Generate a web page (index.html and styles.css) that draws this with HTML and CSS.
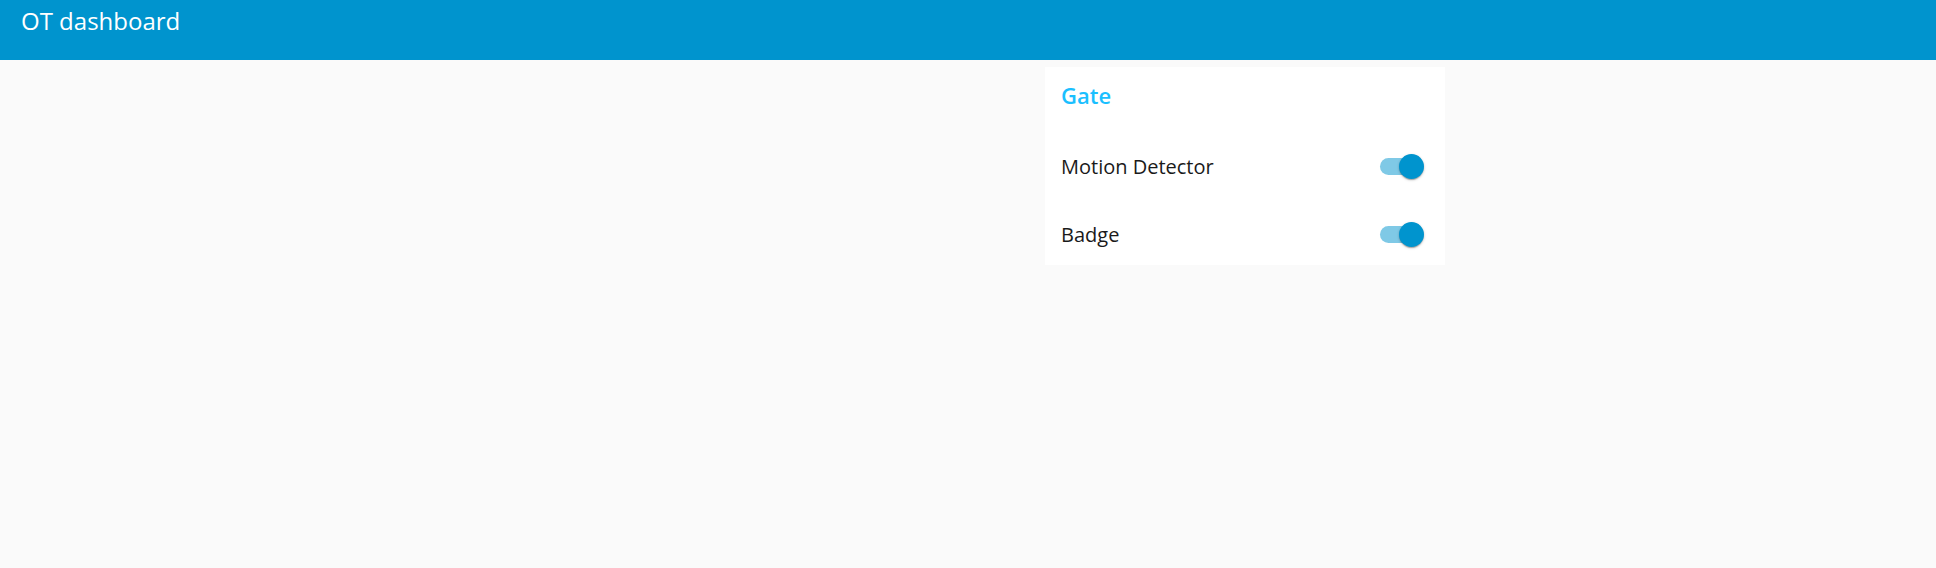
FILE: index.html
```html
<!DOCTYPE html>
<html lang="en">
<head>
<meta charset="utf-8">
<title>OT dashboard</title>
<link rel="stylesheet" href="styles.css">
</head>
<body>
<header class="toolbar">
  <div class="toolbar-title">OT dashboard</div>
</header>
<main class="content">
  <section class="group">
    <div class="group-title">Gate</div>
    <div class="group-rows">
      <div class="row">
        <span class="row-label">Motion Detector</span>
        <span class="switch is-on" role="switch" aria-checked="true"><span class="switch-bar"></span><span class="switch-thumb"></span></span>
      </div>
      <div class="row">
        <span class="row-label">Badge</span>
        <span class="switch is-on" role="switch" aria-checked="true"><span class="switch-bar"></span><span class="switch-thumb"></span></span>
      </div>
    </div>
  </section>
</main>
</body>
</html>
```

FILE: styles.css
```css
html, body {
  margin: 0;
  padding: 0;
  height: 100%;
}

body {
  background: #fafafa;
  font-family: "Open Sans", "Noto Sans", "DejaVu Sans", sans-serif;
  color: #111111;
}

.toolbar {
  box-sizing: border-box;
  height: 60px;
  background: #0094ce;
  padding: 6px 21px 0;
}

.toolbar-title {
  color: #ffffff;
  font-size: 24px;
  line-height: 30px;
}

.content {
  padding: 7px 0 0 1045px;
}

.group {
  width: 400px;
  background: #ffffff;
  padding-bottom: 1px;
}

.group-title {
  padding: 0 16px 3px 16px;
  line-height: 57px;
  font-size: 22px;
  font-weight: 600;
  color: #1bbfff;
}

.group-rows {
  display: flex;
  flex-direction: column;
  gap: 8px;
  padding-top: 9px;
}

.row {
  height: 60px;
  display: flex;
  align-items: center;
  justify-content: space-between;
  padding: 0 21px 0 16px;
}

.row-label {
  font-size: 20px;
  color: #1a1a1a;
}

.switch {
  position: relative;
  width: 45px;
  height: 25px;
  display: inline-block;
}

.switch-bar {
  position: absolute;
  left: 1px;
  top: 4px;
  width: 42px;
  height: 17px;
  border-radius: 9px;
  background: #7fc9e6;
}

.switch-thumb {
  position: absolute;
  right: 0;
  top: 0;
  width: 25px;
  height: 25px;
  border-radius: 50%;
  background: #0094ce;
  box-shadow: 0 1px 3px 0 rgba(0, 0, 0, 0.2), 0 1px 1px 0 rgba(0, 0, 0, 0.14), 0 2px 1px -1px rgba(0, 0, 0, 0.12);
}
```
